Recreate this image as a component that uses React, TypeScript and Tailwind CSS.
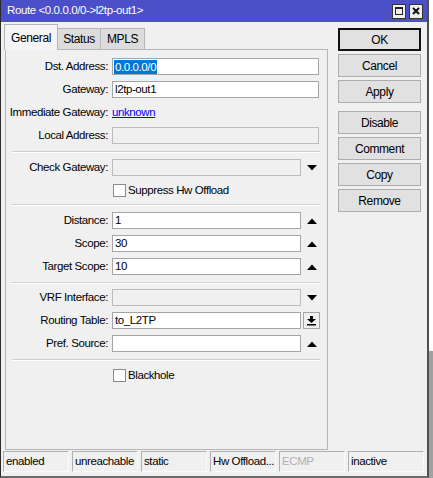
const DownTri = () => (
  <svg width="10" height="6" viewBox="0 0 10 6">
    <path d="M0 0h10L5 5.5z" fill="#000" />
  </svg>
);

const UpTri = () => (
  <svg width="10" height="6" viewBox="0 0 10 6">
    <path d="M5 0.5L10 6H0z" fill="#000" />
  </svg>
);

function Label({ text }: { text: string }) {
  return <div className="w-[102px] shrink-0 flex justify-end whitespace-nowrap">{text}</div>;
}

function Field({
  label,
  value,
  disabled,
  kind,
}: {
  label: string;
  value?: string;
  disabled?: boolean;
  kind?: "down" | "up" | "menu";
}) {
  const width = kind ? "w-[189px]" : "w-[207px]";
  return (
    <div className="flex items-center h-[17px]">
      <Label text={label} />
      <div
        className={`ml-[4px] h-[17px] ${width} border flex items-center pl-[2px] ${
          disabled ? "bg-[#f0f0f0] border-[#bcbcbc]" : "bg-white border-[#a5a5a5]"
        }`}
      >
        {value}
      </div>
      {kind === "down" && (
        <div className="w-[18px] ml-[2px] flex justify-center">
          <DownTri />
        </div>
      )}
      {kind === "up" && (
        <div className="w-[18px] ml-[2px] flex justify-center">
          <UpTri />
        </div>
      )}
      {kind === "menu" && (
        <div className="ml-[2px] w-[17px] h-[17px] border border-[#a5a5a5] bg-[#f0f0f0] flex items-center justify-center">
          <svg width="9" height="10" viewBox="0 0 9 10">
            <rect x="3" y="0" width="3" height="3" fill="#000" />
            <path d="M0 3h9L4.5 7z" fill="#000" />
            <rect x="0" y="8" width="9" height="1.5" fill="#000" />
          </svg>
        </div>
      )}
    </div>
  );
}

function Sep({ mt }: { mt: string }) {
  return <div className={`${mt} ml-[6px] w-[308px] h-[2px] border-t border-t-[#cfcfcf] border-b border-b-white`} />;
}

function Check({ label, mt }: { label: string; mt: string }) {
  return (
    <div className={`${mt} flex items-center h-[17px] pl-[107px]`}>
      <div className="w-[13px] h-[13px] bg-white border border-[#8a8a8a]" />
      <span className="ml-[2px]">{label}</span>
    </div>
  );
}

const buttons = [
  ["OK", "Cancel", "Apply"],
  ["Disable", "Comment", "Copy", "Remove"],
];

const status = [
  { t: "enabled", w: "w-[66px]" },
  { t: "unreachable", w: "w-[66px]" },
  { t: "static", w: "w-[66px]" },
  { t: "Hw Offload...", w: "w-[66px]" },
  { t: "ECMP", w: "w-[66px]", dim: true },
  { t: "inactive", w: "w-[76px]" },
];

export default function App() {
  return (
    <div className="w-[433px] h-[478px] flex bg-white text-[11.5px] tracking-[-0.4px] text-black font-['Liberation_Sans',Arial,sans-serif] overflow-hidden">
      <div className="w-[429px] h-full flex flex-col border-l border-l-[#2a2a2a] border-r-2 border-r-[#505050] border-b-2 border-b-[#6a6a6a] bg-[#f0f0f0]">
        {/* title bar */}
        <div className="h-[22px] shrink-0 bg-[#4b4fc8] flex items-center pl-[6px] pr-[4px]">
          <span className="text-white">Route &lt;0.0.0.0/0-&gt;l2tp-out1&gt;</span>
          <div className="ml-auto flex gap-[3px]">
            <div className="w-[14px] h-[15px] bg-[#f0f0f0] border border-[#333] flex items-center justify-center">
              <div className="w-[8px] h-[8px] border border-[#222] border-t-2" />
            </div>
            <div className="w-[14px] h-[15px] bg-[#f0f0f0] border border-[#333] flex items-center justify-center">
              <svg width="8" height="8" viewBox="0 0 8 8">
                <path d="M1 1L7 7M7 1L1 7" stroke="#111" strokeWidth="2" />
              </svg>
            </div>
          </div>
        </div>

        {/* body */}
        <div className="flex-1 flex flex-col">
          <div className="flex">
            {/* left: tabs + panel */}
            <div className="ml-[4px] w-[323px] flex flex-col">
              <div className="flex items-end h-[27px] pt-[2px] -ml-px">
                <div className="w-[54px] h-[26px] flex items-center justify-center bg-[#f4f4f4] border border-[#b5b5b5] border-b-0 relative z-10 -mb-px text-[12px]">
                  General
                </div>
                <div className="w-[43px] h-[21px] flex items-center justify-center bg-[#dcdcdc] border border-[#b5b5b5] border-l-0 border-b-0 text-[12px]">
                  Status
                </div>
                <div className="w-[44px] h-[21px] flex items-center justify-center bg-[#dcdcdc] border border-[#b5b5b5] border-l-0 border-b-0 text-[12px]">
                  MPLS
                </div>
              </div>
              <div className="h-[401px] border border-[#b5b5b5] flex flex-col pt-[8px]">
                <Field label="Dst. Address:" value="" />
                <div className="-mt-[17px] ml-[106px] h-[17px] flex items-center pl-[2px] pointer-events-none">
                  <span className="bg-[#0078d7] text-white px-px leading-[14px]">0.0.0.0/0</span>
                </div>
                <div className="mt-[6px]">
                  <Field label="Gateway:" value="l2tp-out1" />
                </div>
                <div className="mt-[6px] flex items-center h-[17px]">
                  <Label text="Immediate Gateway:" />
                  <span className="ml-[4px] text-[#0000ff] underline">unknown</span>
                </div>
                <div className="mt-[6px]">
                  <Field label="Local Address:" disabled />
                </div>
                <Sep mt="mt-[7px]" />
                <div className="mt-[6px]">
                  <Field label="Check Gateway:" disabled kind="down" />
                </div>
                <Check label="Suppress Hw Offload" mt="mt-[6px]" />
                <Sep mt="mt-[5px]" />
                <div className="mt-[6px] flex flex-col gap-[6px]">
                  <Field label="Distance:" value="1" kind="up" />
                  <Field label="Scope:" value="30" kind="up" />
                  <Field label="Target Scope:" value="10" kind="up" />
                </div>
                <Sep mt="mt-[7px]" />
                <div className="mt-[5px] flex flex-col gap-[6px]">
                  <Field label="VRF Interface:" disabled kind="down" />
                  <Field label="Routing Table:" value="to_L2TP" kind="menu" />
                  <Field label="Pref. Source:" value="" kind="up" />
                </div>
                <Sep mt="mt-[7px]" />
                <Check label="Blackhole" mt="mt-[6px]" />
              </div>
            </div>

            {/* right: buttons */}
            <div className="ml-[10px] mt-[6px] w-[83px] flex flex-col gap-[8px] text-[12px]">
              {buttons.map((group, gi) => (
                <div key={gi} className="flex flex-col gap-[3px]">
                  {group.map((b) => (
                    <div
                      key={b}
                      className={`h-[23px] flex items-center justify-center bg-[#e1e1e1] border ${
                        b === "OK" ? "border-[#111] border-2" : "border-[#adadad]"
                      }`}
                    >
                      {b}
                    </div>
                  ))}
                </div>
              ))}
            </div>
          </div>

          {/* status bar */}
          <div className="mt-px ml-[2px] flex gap-[3px]">
            {status.map((s) => (
              <div
                key={s.t}
                className={`${s.w} h-[21px] flex items-center pl-[2px] whitespace-nowrap overflow-hidden bg-[#f0f0f0] border border-[#b0b0b0] border-r-[#fafafa] border-b-[#fafafa] ${
                  s.dim ? "text-[#b0b0b0]" : ""
                }`}
              >
                {s.t}
              </div>
            ))}
          </div>
        </div>
      </div>
      <div className="flex-1 flex flex-col">
        <div className="h-[351px] bg-white" />
        <div className="flex-1 bg-[#a0a0a0]" />
      </div>
    </div>
  );
}
